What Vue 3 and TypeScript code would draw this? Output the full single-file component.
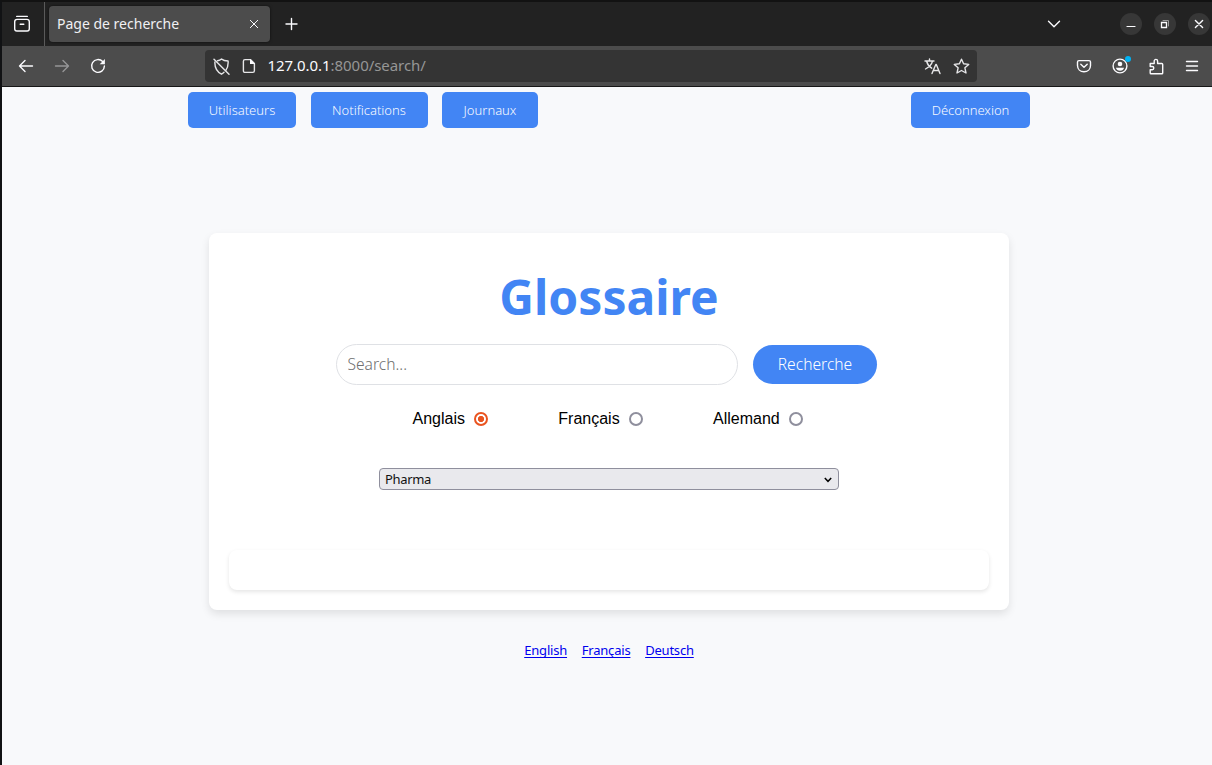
<script setup lang="ts">
import { ref } from 'vue'

interface NavButton { label: string; width: number }

const navButtons: NavButton[] = [
  { label: 'Utilisateurs', width: 108 },
  { label: 'Notifications', width: 117 },
  { label: 'Journaux', width: 96 },
]
const languages = ['Anglais', 'Français', 'Allemand']
const selected = ref('Anglais')
const domain = ref('Pharma')
const links = ['English', 'Français', 'Deutsch']
</script>

<template>
  <div class="window">
    <div class="tabstrip">
      <div class="recent">
        <svg width="18" height="18" viewBox="0 0 18 18" class="ico">
          <path d="M3.7 1.4h10.6" />
          <path d="M1.7 6.8c0-1.6 1-2.4 2.4-2.4h9.8c1.4 0 2.4.8 2.4 2.4v7c0 1.4-.8 2.2-2.2 2.2H3.9c-1.4 0-2.2-.8-2.2-2.2z" />
          <path d="M7.2 9.3h3.6" />
        </svg>
      </div>
      <div class="tab">
        <span class="tab-title">Page de recherche</span>
        <svg width="10" height="10" viewBox="0 0 10 10" class="ico thin"><path d="M1.300 1.300l7.400 7.400M8.700 1.300L1.300 8.700" /></svg>
      </div>
      <svg width="14" height="14" viewBox="0 0 14 14" class="ico plus"><path d="M6.500 1.500v11M1 7h11" /></svg>
      <svg width="14" height="8" viewBox="0 0 14 8" class="ico chevron"><path d="M1.500 1.200L7 6.700l5.500-5.500" /></svg>
      <div class="controls">
        <span class="control"><svg width="10" height="10" viewBox="0 0 10 10" class="ico line"><path d="M1 7.500h8" /></svg></span>
        <span class="control">
          <svg width="10" height="10" viewBox="0 0 10 10" class="ico square">
            <path d="M1.500 3.500h5v5h-5z" /><path class="dim" d="M3 1.500h5.500V7" />
          </svg>
        </span>
        <span class="control"><svg width="10" height="10" viewBox="0 0 10 10" class="ico"><path d="M1.400 1.400l7.200 7.200M8.600 1.400L1.400 8.600" /></svg></span>
      </div>
    </div>

    <div class="toolbar">
      <div class="nav-icons">
        <span class="cell"><svg width="16" height="16" viewBox="0 0 16 16" class="ico"><path d="M1.500 8h13M7 2.500L1.500 8 7 13.500" /></svg></span>
        <span class="cell faded"><svg width="16" height="16" viewBox="0 0 16 16" class="ico"><path d="M1.500 8h13M9 2.500L14.500 8 9 13.500" /></svg></span>
        <span class="cell">
          <svg width="16" height="16" viewBox="0 0 16 16" class="ico">
            <path d="M12.700 3.600A6.400 6.400 0 1 0 14.400 8" /><path class="solid" d="M14.900 1v5.200H9.700z" />
          </svg>
        </span>
      </div>
      <div class="urlbar">
        <svg width="17" height="17" viewBox="0 0 17 17" class="ico url-ico">
          <path d="M4.500 2.700C6 2.500 7.500 1.900 8.500 1c1.700 1.500 4 2 6.600 2 .3 4-.5 7-2.300 9.400M11 14.300c-.7.700-1.500 1.300-2.500 1.900C3.500 13.400 1.600 9.800 1.900 4" />
          <path d="M1 1.300l15 15" />
        </svg>
        <svg width="14" height="16" viewBox="0 0 14 16" class="ico url-ico file">
          <path d="M3 1.600h5.400l4 4v7.200c0 1-.6 1.600-1.600 1.600H3c-1 0-1.600-.6-1.600-1.600V3.200c0-1 .6-1.600 1.600-1.600z" />
          <path class="solid" d="M8 1v5h5z" />
        </svg>
        <span class="url"><b>127.0.0.1</b>:8000/search/</span>
        <svg width="17" height="17" viewBox="0 0 17 17" class="ico url-ico translate">
          <path d="M1 3h9M5.500 1v2M8.500 3.200C7.800 6.300 5 9.200 1.500 11M2.700 3.500c.8 3 2.600 5.300 5 6.700" />
          <path d="M8 15.500l3.800-9h.5l3.700 9M9.500 12.500h5.200" />
        </svg>
        <svg width="17" height="17" viewBox="0 0 17 17" class="ico url-ico">
          <path d="M8.500 1.200l2.100 4.600 5.100.6-3.800 3.400 1.100 5.200-4.500-2.500L4 15l1.100-5.200-3.800-3.400 5.100-.6z" />
        </svg>
      </div>
      <div class="actions">
        <span class="cell">
          <svg width="16" height="16" viewBox="0 0 16 16" class="ico">
            <path d="M3 2.600h10c1 0 1.500.6 1.500 1.500v3.400c0 3.800-2.800 6.200-6.500 6.200S1.500 11.300 1.500 7.500V4.100c0-.9.500-1.500 1.500-1.500z" /><path d="M4.800 6.200L8 9.300l3.200-3.100" />
          </svg>
        </span>
        <span class="cell account">
          <svg width="16" height="16" viewBox="0 0 16 16" class="ico">
            <circle cx="8" cy="8" r="6.900" /><circle class="solid" cx="8" cy="6" r="2.300" />
            <path class="solid" d="M4 9.800h8c-.2 2-1.900 3-4 3s-3.800-1-4-3z" />
          </svg>
          <i class="badge"></i>
        </span>
        <span class="cell">
          <svg width="16" height="17" viewBox="0 0 16 17" class="ico">
            <path d="M2.200 5.500h4V3.100a1.700 1.700 0 0 1 3.400 0v2.400h4.200c.6 0 .9.300.9.900v8.500c0 .5-.3.800-.8.800H3c-.5 0-.8-.3-.8-.8v-3.200h2a1.600 1.600 0 0 0 0-3.200h-2z" />
          </svg>
        </span>
        <span class="cell"><svg width="14" height="12" viewBox="0 0 14 12" class="ico"><path d="M1.500 1.500h11M1.500 6h11M1.500 10.500h11" /></svg></span>
      </div>
    </div>

    <main class="page">
      <nav class="nav">
        <button v-for="b in navButtons" :key="b.label" class="btn" :style="{ width: b.width + 'px' }">{{ b.label }}</button>
        <button class="btn logout">Déconnexion</button>
      </nav>

      <section class="card">
        <h1>Glossaire</h1>
        <form class="search" @submit.prevent>
          <input class="field" type="text" placeholder="Search..." />
          <button class="submit">Recherche</button>
        </form>
        <div class="radios">
          <label v-for="l in languages" :key="l" @click="selected = l">
            {{ l }}<span class="radio" :class="{ on: selected === l }"></span>
          </label>
        </div>
        <div class="select-wrap">
          <select v-model="domain"><option>Pharma</option></select>
          <svg width="8" height="6" viewBox="0 0 8 6" class="caret"><path d="M.8 1L4 4.300 7.200 1" /></svg>
        </div>
        <div class="results"></div>
      </section>

      <footer class="links">
        <a v-for="l in links" :key="l" href="#">{{ l }}</a>
      </footer>
    </main>
  </div>
</template>

<style>
body { margin: 0; overflow: hidden; background: #f8f9fb; }
</style>

<style scoped>
* { box-sizing: border-box; }
.window {
  width: 1212px; height: 765px; display: flex; flex-direction: column; overflow: hidden;
  border-left: 2px solid #111214; border-top: 2px solid #121212; background: #f8f9fb;
  font-family: "Noto Sans", "Open Sans", sans-serif;
}
svg { display: block; flex: none; }
.ico { fill: none; stroke: #fbfbfe; stroke-width: 1.4; stroke-linecap: round; stroke-linejoin: round; }
.ico .solid { fill: #fbfbfe; stroke: none; }
.thin { stroke-width: 1; }
.line { stroke-width: 1.2; }
.url-ico { stroke: #e6e6e8; stroke-width: 1.4; }
.square { stroke-width: 1; stroke-linejoin: miter; }
.square path { stroke-width: 1.3; }
.square .dim { stroke: #999; stroke-width: 1; }

.tabstrip { height: 44px; flex: none; display: flex; align-items: center; background: #222; }
.recent { width: 43px; height: 44px; border-right: 1px solid #5a5a5a; display: flex; align-items: center; padding-left: 11px; }
.tab {
  width: 221px; height: 36px; margin-left: 4px; border-radius: 4px; background: #4c4c4c; display: flex;
  align-items: center; justify-content: space-between; padding: 0 11px 0 8px; box-shadow: 0 0 3px rgba(0, 0, 0, .6);
}
.tab-title { color: #f0f0f3; font-size: 14px; line-height: 20px; white-space: nowrap; }
.plus { margin-left: 15px; }
.chevron { margin-left: auto; }
.controls { display: flex; gap: 12px; margin: 0 2px 0 59px; }
.control { width: 22px; height: 22px; border-radius: 50%; background: #373737; display: flex; align-items: center; justify-content: center; }

.toolbar { height: 41px; flex: none; display: flex; background: #4c4c4c; border-bottom: 1px solid #171717; }
.nav-icons { display: flex; padding-left: 6px; }
.cell { width: 36px; height: 40px; display: flex; align-items: center; justify-content: center; position: relative; }
.faded { opacity: .42; }
.urlbar {
  width: 772px; height: 32px; margin: 4px 0 0 89px; padding: 0 7.500px 0 7.500px; border-radius: 4px; background: #343434;
  display: flex; align-items: center;
}
.file { margin-left: 12.500px; }
.url { margin: -2px 0 0 11.500px; font-size: 15px; letter-spacing: -.05px; color: #969696; line-height: 20px; white-space: nowrap; }
.url b { font-weight: 400; color: #fbfbfe; }
.translate { margin: 0 12px 0 auto; }
.actions { display: flex; margin-left: 89px; }
.badge { position: absolute; left: 22.500px; top: 10px; width: 6px; height: 6px; border-radius: 50%; background: #00b3f4; }

.page { flex: 1; display: flex; flex-direction: column; align-items: center; padding-left: 4px; }
.nav { width: 842px; display: flex; gap: 14.500px; padding-top: 5px; }
.btn {
  height: 36px; padding: 0; border: 0; border-radius: 5px; background: #4285f4; color: #f8faff;
  font: 350 13px/18px "Noto Sans", sans-serif; letter-spacing: 0;
}
.logout { width: 119px; margin-left: auto; }
.card {
  width: 800px; height: 377px; margin-top: 105px; padding: 20px; border-radius: 8px; background: #fff;
  box-shadow: 0 4px 8px rgba(0, 0, 0, .1); display: flex; flex-direction: column; align-items: center;
}
h1 { margin: 11px 0 0; font: 700 48px/66px "Noto Sans", "Open Sans", sans-serif; color: #4285f4; }
.search { display: flex; align-items: center; gap: 15px; margin: 14px 5px 0 0; }
.field {
  width: 402px; height: 41px; padding: 0 10.500px 2px; border: 1px solid #dfe1e5; border-radius: 21px; outline: 0; background: #fff;
  font: 350 15.600px/20px "Noto Sans", sans-serif;
}
.field::placeholder { color: #707070; opacity: 1; }
.submit {
  width: 124px; height: 39px; padding: 0 0 1px; border: 0; border-radius: 20px; background: #4285f4; color: #fff;
  font: 350 15.600px/20px "Noto Sans", sans-serif;
}
.radios { display: flex; gap: 70px; margin: 24px 2.500px 0 0; font: 16px/20px "Liberation Sans", Arial, sans-serif; color: #000; }
.radios label { display: flex; align-items: center; }
.radio { width: 14px; height: 14px; margin-left: 9.300px; border: 2px solid #8f8f9d; border-radius: 50%; background: #fff; }
.radio.on { border-color: #e95420; background: radial-gradient(circle, #e95420 0 2.800px, #fff 3.400px); }
.select-wrap { width: 460px; height: 22px; margin-top: 39px; position: relative; }
select {
  display: block; width: 100%; height: 100%; appearance: none; padding: 0 5px; border: 1px solid #8f8f9d; border-radius: 4px;
  background: #e9e9ed; color: #111; font: 13px/18px "Noto Sans", sans-serif; letter-spacing: -.35px;
}
.caret { position: absolute; right: 7px; top: 9px; fill: none; stroke: #000; stroke-width: 1.500; pointer-events: none; }
.results { width: 760px; height: 40px; margin-top: auto; border-radius: 8px; background: #fff; box-shadow: 0 2px 4px rgba(0, 0, 0, .1); }
.links { display: flex; gap: 14.700px; margin-top: 31px; font-size: 13px; line-height: 18px; letter-spacing: -.2px; }
.links a { color: #0000ee; text-decoration: underline; text-decoration-skip-ink: none; text-decoration-thickness: 1px; text-underline-offset: 2px; }
</style>
